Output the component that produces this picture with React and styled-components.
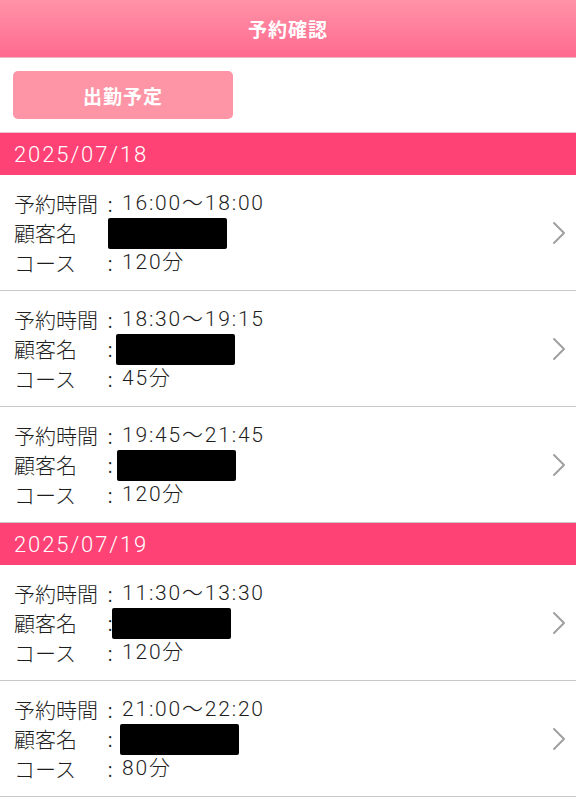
import React from "react";
import styled, { createGlobalStyle } from "styled-components";

const Global = createGlobalStyle`
  html, body { margin: 0; padding: 0; background: #fff; }
  body { font-family: "Noto Sans CJK JP", "Noto Sans", sans-serif; color: #222; }
`;

const Page = styled.div`
  width: 576px;
  min-height: 812px;
  background: #fff;
`;

const Header = styled.header`
  height: 57px;
  display: flex;
  align-items: center;
  justify-content: center;
  background: linear-gradient(to bottom, #ff93a7 0%, #ff6a8f 100%);
  border-bottom: 1px solid #e9b9c4;
  color: #fff;
  font-size: 19px;
  font-weight: 700;
  letter-spacing: 1px;
`;

const Toolbar = styled.div`
  height: 75px;
  padding: 13px 13px 0;
  box-sizing: border-box;
  border-bottom: 1px solid #eec3cd;
`;

const Button = styled.button`
  width: 220px;
  height: 48px;
  border: none;
  border-radius: 5px;
  background: #fd95a6;
  color: #fff;
  font-family: inherit;
  font-size: 19px;
  font-weight: 700;
  letter-spacing: 1px;
`;

const DateBar = styled.div`
  height: 42px;
  display: flex;
  align-items: center;
  padding-left: 14px;
  background: #ff4275;
  color: #fff;
  font-family: Roboto, "Noto Sans CJK JP", sans-serif;
  font-size: 22px;
  font-weight: 300;
  letter-spacing: 1.9px;
`;

const Item = styled.div`
  height: 116px;
  box-sizing: border-box;
  display: flex;
  align-items: center;
  padding: 0 10px 0 14px;
  border-bottom: 1px solid #c8c8c8;
`;

const Info = styled.div`
  flex: 1;
  display: grid;
  grid-template-columns: 84px auto 1fr;
  grid-auto-rows: 29.5px;
  align-items: center;
  font-size: 21px;
  font-weight: 300;
  line-height: 29.5px;
  color: #1e1e1e;
  margin-top: 1px;
`;

const Label = styled.span`
  white-space: nowrap;
`;

const Colon = styled.span`
  width: 24px;
  text-align: center;
`;

const Value = styled.span`
  font-family: Roboto, "Noto Sans CJK JP", sans-serif;
  letter-spacing: 1.8px;
  white-space: nowrap;
`;

const Redact = styled.span`
  display: block;
  width: 119px;
  height: 31px;
  background: #000;
  border-radius: 2px;
  margin-left: ${(p) => p.$offset}px;
`;

const Chevron = styled.svg`
  width: 14px;
  height: 24px;
  flex: none;
`;

const data = [
  {
    date: "2025/07/18",
    items: [
      { time: "16:00〜18:00", course: "120分", off: -14 },
      { time: "18:30〜19:15", course: "45分", off: -6 },
      { time: "19:45〜21:45", course: "120分", off: -5 },
    ],
  },
  {
    date: "2025/07/19",
    items: [
      { time: "11:30〜13:30", course: "120分", off: -10 },
      { time: "21:00〜22:20", course: "80分", off: -2 },
    ],
  },
];

function Reservation({ time, course, off }) {
  return (
    <Item>
      <Info>
        <Label>予約時間</Label>
        <Colon>:</Colon>
        <Value>{time}</Value>
        <Label>顧客名</Label>
        <Colon>:</Colon>
        <Redact $offset={off} />
        <Label>コース</Label>
        <Colon>:</Colon>
        <Value>{course}</Value>
      </Info>
      <Chevron viewBox="0 0 14 24">
        <path d="M2 2 L12 12 L2 22" fill="none" stroke="#a0a0a0" strokeWidth="2" strokeLinecap="round" strokeLinejoin="round" />
      </Chevron>
    </Item>
  );
}

export default function App() {
  return (
    <Page>
      <Global />
      <Header>予約確認</Header>
      <Toolbar>
        <Button>出勤予定</Button>
      </Toolbar>
      {data.map((g) => (
        <section key={g.date}>
          <DateBar>{g.date}</DateBar>
          {g.items.map((it) => (
            <Reservation key={it.time} {...it} />
          ))}
        </section>
      ))}
    </Page>
  );
}
